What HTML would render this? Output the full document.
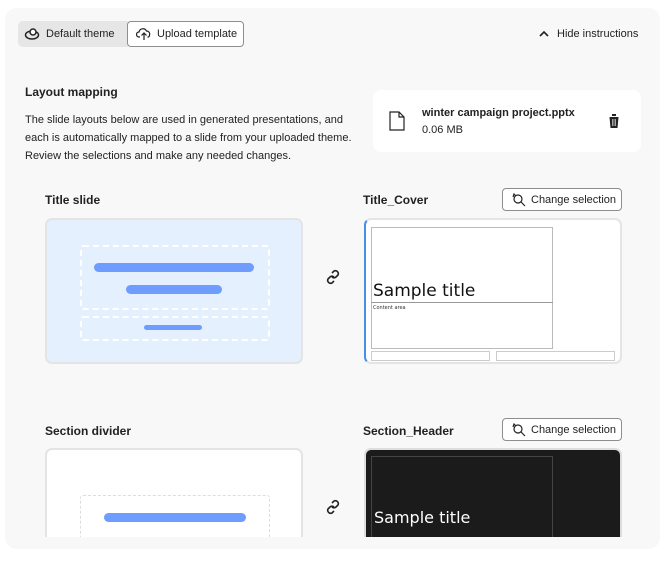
<!DOCTYPE html>
<html><head><meta charset="utf-8"><style>
*{box-sizing:border-box;margin:0;padding:0}
body{width:665px;height:561px;background:#fff;font-family:"Liberation Sans",sans-serif;color:#222;position:relative;overflow:hidden}
.panel{position:absolute;left:5px;top:8px;width:655px;height:541px;background:#f8f8f8;border-radius:12px}
.clip{position:absolute;left:0;top:0;width:665px;height:537px;overflow:hidden}
.a{position:absolute}
.txt{font-size:11px;white-space:nowrap}
.btn{position:absolute;border:1px solid #8e8e8e;border-radius:4px;background:#fff;font-size:11px;display:flex;align-items:center;padding-left:8px;gap:5px}
.card{position:absolute;border:2px solid #e4e4e4;border-radius:7px;overflow:hidden}
.bar{position:absolute;background:#6e9cff;border-radius:5px}
.dash{position:absolute;border:2px dashed #fff;border-radius:3px}
h3{position:absolute;font-size:12px;font-weight:bold}
</style></head><body>
<div class="panel"></div>
<div class="clip">
<div class="a" style="left:18px;top:21px;width:110px;height:26px;background:#e6e6e6;border-radius:5px 0 0 5px"></div>
<svg class="a" style="left:24px;top:27px" width="16" height="14" viewBox="0 0 16 14"><ellipse cx="8" cy="8" rx="6.5" ry="4" fill="none" stroke="#222" stroke-width="1.5"/><circle cx="9" cy="5" r="3" fill="#fff" stroke="#222" stroke-width="1.5"/></svg>
<div class="a txt" style="left:46px;top:28px">Default theme</div>
<div class="btn" style="left:127px;top:21px;width:117px;height:26px"><svg width="16" height="14" viewBox="0 0 16 14"><path d="M4 10H3a2.5 2.5 0 010-5 4 4 0 017.5-1 3 3 0 013 4 2 2 0 01-1 2h-1M8 13V6M5.5 8.5L8 6l2.5 2.5" fill="none" stroke="#222" stroke-width="1.2"/></svg><span>Upload template</span></div>
<svg class="a" style="left:539px;top:30px" width="10" height="8"><path d="M1 6l4-4 4 4" fill="none" stroke="#222" stroke-width="1.6"/></svg>
<div class="a txt" style="left:557px;top:28px">Hide instructions</div>
<h3 style="left:25px;top:85px">Layout mapping</h3>
<div class="a" style="left:25px;top:111px;font-size:11px;line-height:18px;width:340px">The slide layouts below are used in generated presentations, and each is automatically mapped to a slide from your uploaded theme. Review the selections and make any needed changes.</div>
<div class="a" style="left:373px;top:90px;width:268px;height:62px;background:#fff;border-radius:8px"></div>
<svg class="a" style="left:389px;top:111px" width="16" height="20"><path d="M1 1h9l5 5v13H1z M10 1v5h5" fill="none" stroke="#222" stroke-width="1.2"/></svg>
<div class="a txt" style="left:422px;top:107px;font-weight:bold">winter campaign project.pptx</div>
<div class="a txt" style="left:422px;top:124px">0.06 MB</div>
<svg class="a" style="left:608px;top:114px" width="12" height="14"><path d="M0 2h12M4 2V0h4v2M1.5 3h9l-1 11h-7z" fill="#222"/><path d="M4.5 5v7M6 5v7M7.5 5v7" stroke="#fff" stroke-width=".6"/></svg>

<h3 style="left:45px;top:193px">Title slide</h3>
<div class="card" style="left:45px;top:218px;width:258px;height:146px;background:#e5f0ff">
<div class="dash" style="left:33px;top:25px;width:190px;height:65px"></div>
<div class="dash" style="left:33px;top:96px;width:190px;height:25px"></div>
<div class="bar" style="left:47px;top:43px;width:160px;height:9px"></div>
<div class="bar" style="left:79px;top:65px;width:96px;height:9px"></div>
<div class="bar" style="left:97px;top:105px;width:58px;height:5px"></div>
</div>
<svg class="a" style="left:324px;top:268px" width="18" height="18" viewBox="0 0 18 18"><g fill="none" stroke="#222" stroke-width="1.6"><path d="M8 5l2-2a3 3 0 014 4l-2 2a3 3 0 01-4 0"/><path d="M10 13l-2 2a3 3 0 01-4-4l2-2a3 3 0 014 0"/></g></svg>
<h3 style="left:363px;top:193px">Title_Cover</h3>
<div class="btn" style="left:502px;top:188px;width:120px;height:23px"><svg width="15" height="14" viewBox="0 0 15 14"><circle cx="7" cy="6" r="4" fill="none" stroke="#222" stroke-width="1.2"/><path d="M10 9l4 4M2 4l1-3 2 2" fill="none" stroke="#222" stroke-width="1.2"/></svg><span>Change selection</span></div>
<div class="card" style="left:364px;top:218px;width:258px;height:146px;background:#fff;border-left:2px solid #4a90e2">
<div class="a" style="left:5px;top:7px;width:182px;height:122px;border:1px solid #bbb"></div>
<div class="a" style="left:5px;top:82px;width:182px;height:1px;background:#999"></div>
<div class="a" style="left:7px;top:61px;font-family:'DejaVu Sans',sans-serif;font-size:17px;color:#111">Sample title</div>
<div class="a" style="left:7px;top:85px;font-family:'DejaVu Sans',sans-serif;font-size:5px;color:#333">Content area</div>
<div class="a" style="left:5px;top:131px;width:119px;height:10px;border:1px solid #ccc"></div>
<div class="a" style="left:130px;top:131px;width:119px;height:10px;border:1px solid #ccc"></div>
</div>

<h3 style="left:45px;top:424px">Section divider</h3>
<div class="card" style="left:45px;top:448px;width:258px;height:146px;background:#fff">
<div class="dash" style="left:33px;top:45px;width:190px;height:70px;border-color:#ddd;border-width:1px"></div>
<div class="bar" style="left:57px;top:63px;width:142px;height:9px"></div>
</div>
<svg class="a" style="left:324px;top:498px" width="18" height="18" viewBox="0 0 18 18"><g fill="none" stroke="#222" stroke-width="1.6"><path d="M8 5l2-2a3 3 0 014 4l-2 2a3 3 0 01-4 0"/><path d="M10 13l-2 2a3 3 0 01-4-4l2-2a3 3 0 014 0"/></g></svg>
<h3 style="left:363px;top:424px">Section_Header</h3>
<div class="btn" style="left:502px;top:418px;width:120px;height:23px"><svg width="15" height="14" viewBox="0 0 15 14"><circle cx="7" cy="6" r="4" fill="none" stroke="#222" stroke-width="1.2"/><path d="M10 9l4 4M2 4l1-3 2 2" fill="none" stroke="#222" stroke-width="1.2"/></svg><span>Change selection</span></div>
<div class="card" style="left:364px;top:448px;width:258px;height:146px;background:#1b1b1b;border-color:#ddd">
<div class="a" style="left:5px;top:6px;width:182px;height:122px;border:1px solid #444"></div>
<div class="a" style="left:8px;top:58px;font-family:'DejaVu Sans',sans-serif;font-size:16px;color:#fff">Sample title</div>
</div>
</div>
</body></html>
